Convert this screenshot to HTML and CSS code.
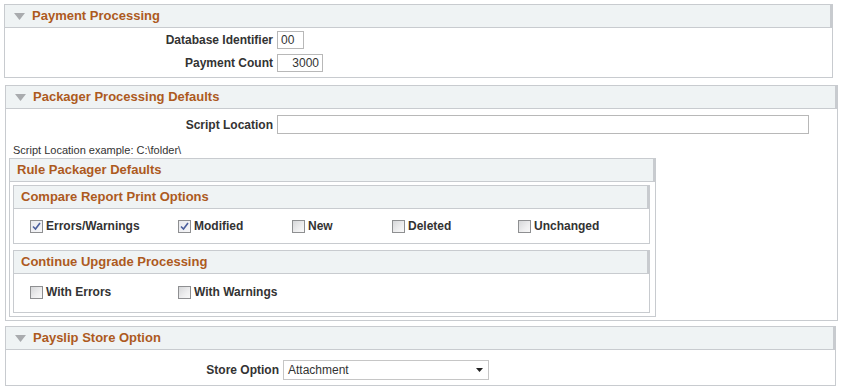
FILE: index.html
```html
<!DOCTYPE html>
<html>
<head>
<meta charset="utf-8">
<link rel="stylesheet" href="styles.css">
</head>
<body>
<div class="page">
  <section class="box box-pay">
    <div class="hdr"><svg class="tri" width="11" height="7" viewBox="0 0 11 7"><polygon points="0,0 11,0 5.5,7" fill="#a9abae"/></svg><span class="title">Payment Processing</span></div>
    <div class="body body-pay">
      <div class="row"><label class="lbl w268">Database Identifier</label><div class="input in-db">00</div></div>
      <div class="row"><label class="lbl w268">Payment Count</label><div class="input in-cnt">3000</div></div>
    </div>
  </section>

  <section class="box box-pkg">
    <div class="hdr"><svg class="tri" width="11" height="7" viewBox="0 0 11 7"><polygon points="0,0 11,0 5.5,7" fill="#a9abae"/></svg><span class="title">Packager Processing Defaults</span></div>
    <div class="body body-pkg">
      <div class="row row-script"><label class="lbl w267">Script Location</label><div class="input in-script"></div></div>
      <div class="hint">Script Location example: C:\folder\</div>
      <div class="box rule">
        <div class="hdr hdr-sub"><span class="title">Rule Packager Defaults</span></div>
        <div class="rule-body">
          <div class="box sub">
            <div class="hdr hdr-sub2"><span class="title">Compare Report Print Options</span></div>
            <div class="checks c5">
              <span class="chk"><span class="cb on"><svg width="9" height="9" viewBox="0 0 9 9"><path d="M1 4.5 L3.5 7 L8 1" fill="none" stroke="#4a5e9c" stroke-width="1.6"/></svg></span>Errors/Warnings</span>
              <span class="chk"><span class="cb on"><svg width="9" height="9" viewBox="0 0 9 9"><path d="M1 4.5 L3.5 7 L8 1" fill="none" stroke="#4a5e9c" stroke-width="1.6"/></svg></span>Modified</span>
              <span class="chk"><span class="cb"></span>New</span>
              <span class="chk"><span class="cb"></span>Deleted</span>
              <span class="chk"><span class="cb"></span>Unchanged</span>
            </div>
          </div>
          <div class="box sub sub2">
            <div class="hdr hdr-sub2"><span class="title">Continue Upgrade Processing</span></div>
            <div class="checks c2">
              <span class="chk"><span class="cb"></span>With Errors</span>
              <span class="chk"><span class="cb"></span>With Warnings</span>
            </div>
          </div>
        </div>
      </div>
    </div>
  </section>

  <section class="box box-slip">
    <div class="hdr"><svg class="tri" width="11" height="7" viewBox="0 0 11 7"><polygon points="0,0 11,0 5.5,7" fill="#a9abae"/></svg><span class="title">Payslip Store Option</span></div>
    <div class="body body-slip">
      <div class="row"><label class="lbl w273">Store Option</label><div class="select"><span>Attachment</span><svg width="7" height="4" viewBox="0 0 7 4"><polygon points="0,0 7,0 3.5,4" fill="#222"/></svg></div></div>
    </div>
  </section>
</div>
</body>
</html>
```

FILE: styles.css
```css
* { box-sizing: border-box; }
body {
  margin: 0;
  background: #fff;
  font-family: "Liberation Sans", Arial, sans-serif;
  color: #333;
}
.page {
  padding-top: 4px;
  display: flex;
  flex-direction: column;
}
.box {
  border: 1px solid #c8cbcf;
  background: #fff;
}
.box-pay { margin-left: 4px; width: 829px; height: 74px; }
.box-pkg { margin-left: 5px; margin-top: 7px; width: 833px; height: 236px; }
.box-slip { margin-left: 5px; margin-top: 5px; width: 831px; height: 60px; }

.hdr {
  height: 23px;
  padding-bottom: 1px;
  background: #eff3f4;
  border-bottom: 1px solid #c8cbcf;
  border-right: 2px solid #c8cbcf;
  display: flex;
  align-items: center;
}
.tri { margin-left: 9px; margin-right: 7px; margin-top: 1px; }
.title {
  font-weight: bold;
  font-size: 13px;
  color: #ad5a1e;
}
.body-pay { padding-top: 0; }
.row { display: flex; align-items: center; height: 23px; }
.lbl {
  font-weight: bold;
  font-size: 12px;
  text-align: right;
  padding-right: 4px;
  color: #333;
}
.w268 { width: 272px; }
.w267 { width: 271px; }
.w273 { width: 277px; }
.input {
  height: 18px;
  border: 1px solid #b8b8b8;
  font-size: 12px;
  line-height: 16px;
  padding: 0 3px;
  color: #333;
}
.in-db { width: 27px; }
.in-cnt { width: 46px; text-align: right; }
.body-pkg { padding-top: 5px; }
.in-script { width: 532px; height: 19px; }
.row-script { height: 21px; }
.hint {
  font-size: 11px;
  margin-top: 9px;
  margin-left: 7px;
  height: 13px;
  line-height: 13px;
}
.rule {
  margin-left: 3px;
  margin-top: 1px;
  width: 647px;
  height: 159px;
}
.hdr-sub .title { margin-left: 7px; }
.rule-body { padding: 3px 4px 0 3px; }
.sub { width: 637px; height: 59px; }
.sub2 { margin-top: 6px; height: 63px; }
.hdr-sub2 .title { margin-left: 7px; }
.checks {
  display: grid;
  padding-left: 16px;
  padding-top: 10px;
}
.c5 { grid-template-columns: 148px 114px 100px 126px auto; }
.c2 { grid-template-columns: 148px auto; padding-top: 11px; }
.chk {
  display: flex;
  align-items: center;
  font-weight: bold;
  font-size: 12px;
  color: #333;
}
.cb {
  width: 13px;
  height: 13px;
  border: 1px solid #8e8f91;
  background: linear-gradient(135deg, #d6d7d9 0%, #eeeeef 60%, #f8f8f8 100%);
  margin-right: 3px;
  display: inline-flex;
  align-items: center;
  justify-content: center;
}
.cb.on { background: linear-gradient(135deg, #e8e9ee 0%, #f6f6f8 100%); }
.body-slip { padding-top: 8px; }
.select {
  width: 206px;
  height: 20px;
  border: 1px solid #c6c6c6;
  font-size: 12px;
  display: flex;
  align-items: center;
  justify-content: space-between;
  padding: 0 5px 0 4px;
  color: #333;
}
```
